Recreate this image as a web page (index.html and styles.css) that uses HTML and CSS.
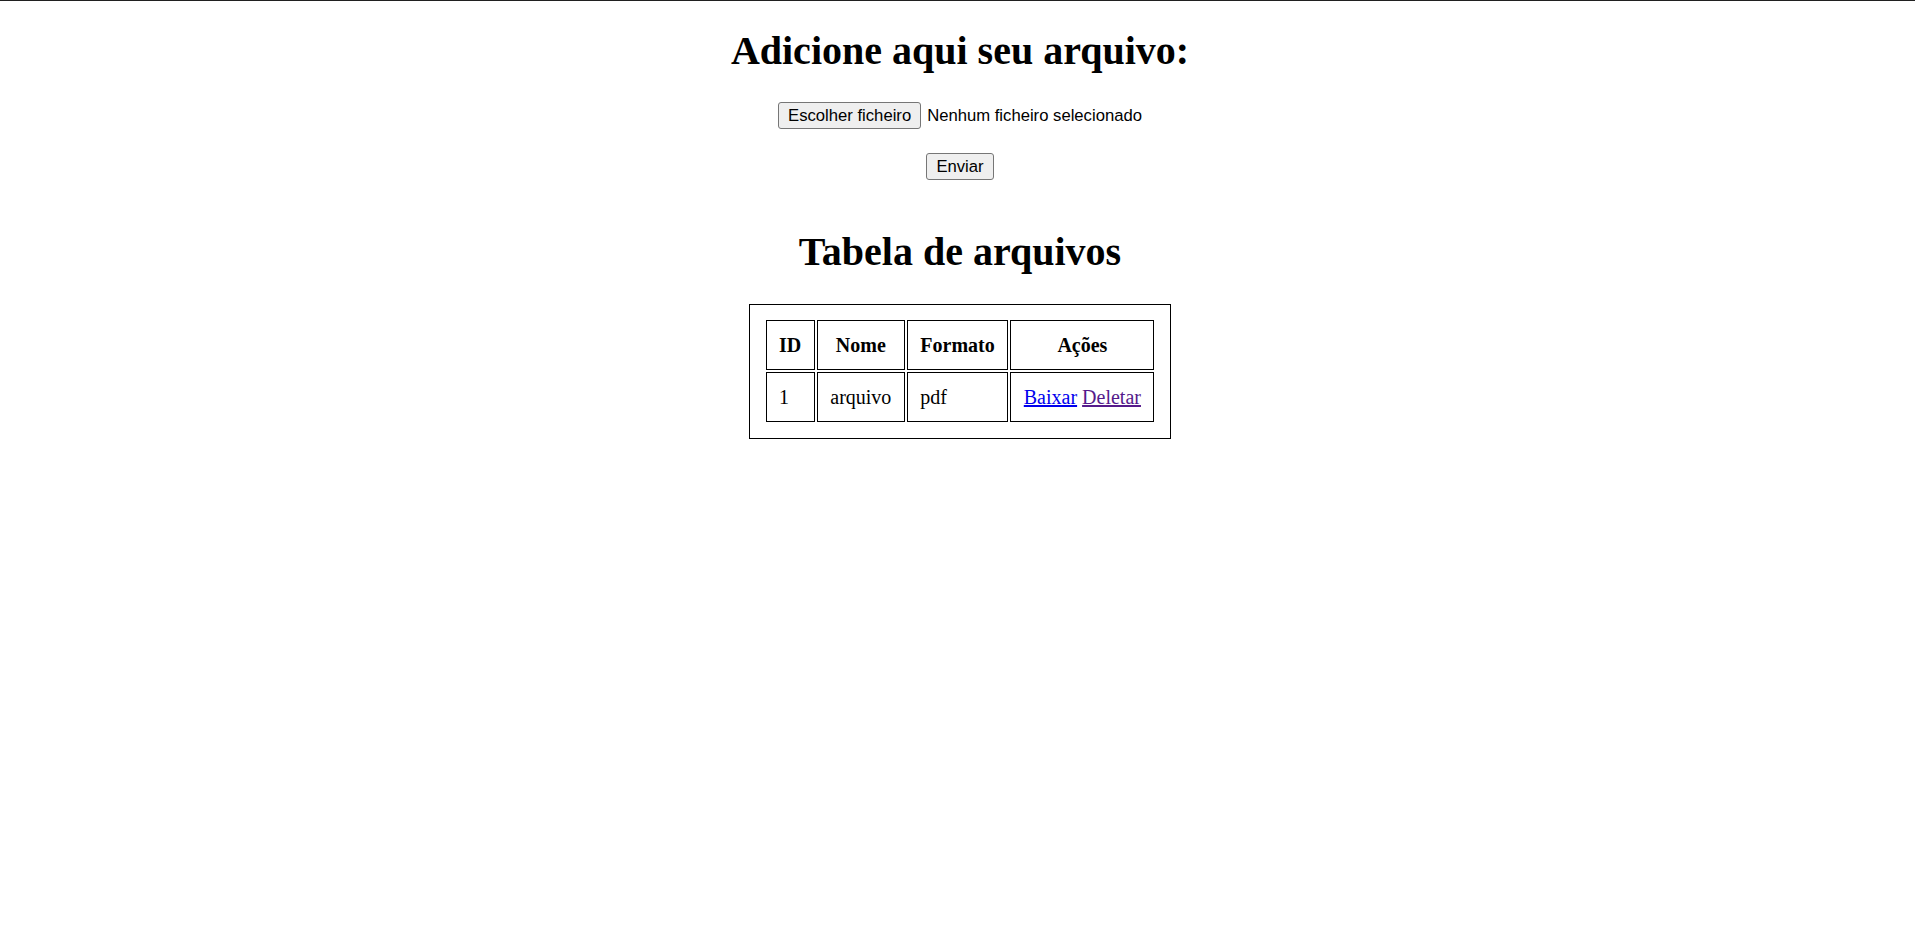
FILE: index.html
```html
<!DOCTYPE html>
<html lang="pt">
<head>
    <meta charset="UTF-8">
    <meta name="viewport" content="width=device-width, initial-scale=1.0">
    <title>Arquivos</title>
    <link rel="stylesheet" href="styles.css">
</head>
<body>
<main class="page">
    <h1 class="title">Adicione aqui seu arquivo:</h1>
    <form class="upload" onsubmit="return false">
        <div class="file-row">
            <button type="button" class="btn">Escolher ficheiro</button>
            <span class="file-name">Nenhum ficheiro selecionado</span>
        </div>
        <div class="send-row">
            <button type="submit" class="btn">Enviar</button>
        </div>
    </form>

    <h1 class="title title-table">Tabela de arquivos</h1>
    <table class="files">
        <thead>
        <tr>
            <th>ID</th>
            <th>Nome</th>
            <th>Formato</th>
            <th>Ações</th>
        </tr>
        </thead>
        <tbody>
        <tr>
            <td>1</td>
            <td>arquivo</td>
            <td>pdf</td>
            <td><a href="#" class="link">Baixar</a> <a href="#" class="link visited">Deletar</a></td>
        </tr>
        </tbody>
    </table>
</main>
</body>
</html>
```

FILE: styles.css
```css
html {
    border-top: 1px solid #202020;
    background: #fff;
}

body {
    margin: 0;
    font-family: "Liberation Serif", "Times New Roman", serif;
    font-size: 20px;
    color: #000;
}

.page {
    display: flex;
    flex-direction: column;
    align-items: center;
    padding-left: 5px;
}

.title {
    font-size: 40px;
    line-height: 46px;
    font-weight: bold;
    margin: 26.8px 0 0;
}

.upload {
    margin-top: 28.5px;
    display: flex;
    flex-direction: column;
    align-items: center;
}

.file-row {
    display: flex;
    align-items: center;
}

.send-row {
    margin-top: 23.6px;
}

.btn {
    font-family: "Liberation Sans", Arial, sans-serif;
    font-size: 16.67px;
    line-height: 19px;
    color: #000;
    background-color: #efefef;
    border: 1px solid #767676;
    border-radius: 3px;
    padding: 3px 9px;
    margin: 0;
}

.file-name {
    font-family: "Liberation Sans", Arial, sans-serif;
    font-size: 16.67px;
    margin-left: 6px;
}

.title-table {
    margin-top: 49.2px;
}

.files {
    margin-top: 28.8px;
    border: 1px solid #000;
    border-collapse: separate;
    border-spacing: 2.3px;
    padding: 13.6px;
}

.files th,
.files td {
    border: 1px solid #000;
    padding: 12.5px;
    line-height: 23px;
}

.files th {
    font-weight: bold;
    text-align: center;
}

.files td {
    text-align: left;
}

.link {
    color: #0000ee;
}

.visited {
    color: #551a8b;
}
```
